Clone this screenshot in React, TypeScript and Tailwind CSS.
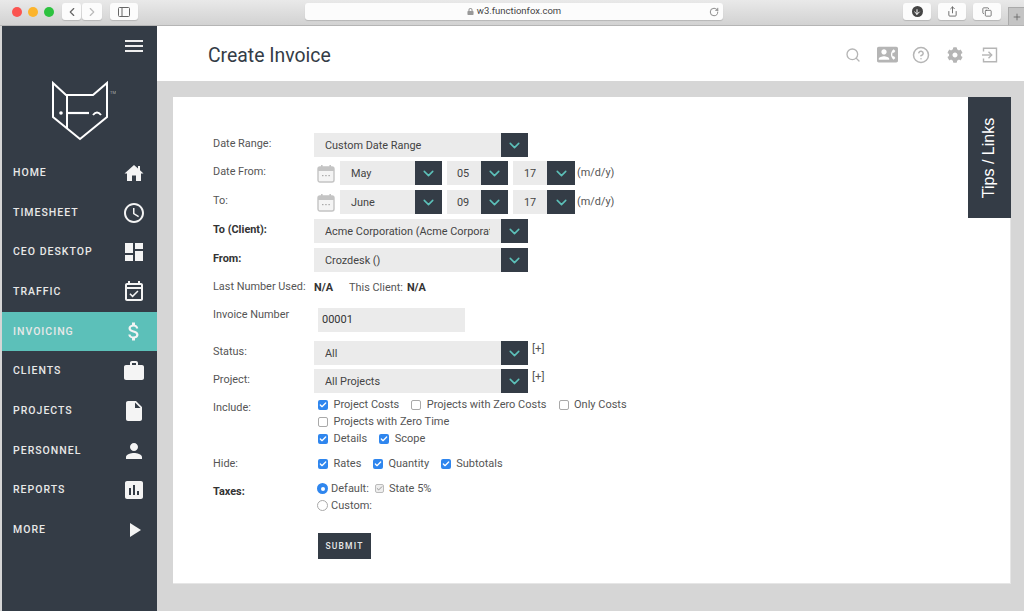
import { ChevronDown, ChevronLeft, ChevronRight, Check, RotateCw, Plus, ArrowDown, Share, Copy, Search, CircleHelp } from 'lucide-react'
import { FaCog, FaLock } from 'react-icons/fa'
import { MdAccessTime, MdDashboard, MdOutlineEventAvailable, MdAttachMoney, MdWork, MdInsertDriveFile, MdPerson, MdAssessment, MdPlayArrow, MdContactPhone } from 'react-icons/md'
import type { ReactNode } from 'react'

function HomeIcon() {
  return (
    <svg width="20" height="18" viewBox="0 0 20 18" fill="currentColor">
      <path d="M10 1 L0.5 9.5 H3 V17 H8 V11.5 H12 V17 H17 V9.5 H19.5 L16 6.3 V2 H14 V4.5 Z" />
    </svg>
  )
}

function ExitIcon() {
  return (
    <svg width="17" height="16" viewBox="0 0 17 16" fill="none" stroke="currentColor" strokeWidth="1.4">
      <path d="M2.5 4.5 V1.2 H15.5 V14.8 H2.5 V11.5" />
      <path d="M1 8 H10.5" />
      <path d="M7.5 4.8 L10.7 8 L7.5 11.2" />
    </svg>
  )
}

const NAV: { label: string; icon: ReactNode; active?: boolean }[] = [
  { label: 'HOME', icon: <HomeIcon /> },
  { label: 'TIMESHEET', icon: <MdAccessTime size={24} /> },
  { label: 'CEO DESKTOP', icon: <MdDashboard size={24} /> },
  { label: 'TRAFFIC', icon: <MdOutlineEventAvailable size={24} /> },
  { label: 'INVOICING', icon: <MdAttachMoney size={27} />, active: true },
  { label: 'CLIENTS', icon: <MdWork size={24} /> },
  { label: 'PROJECTS', icon: <MdInsertDriveFile size={24} /> },
  { label: 'PERSONNEL', icon: <MdPerson size={24} /> },
  { label: 'REPORTS', icon: <MdAssessment size={24} /> },
  { label: 'MORE', icon: <MdPlayArrow size={24} /> },
]

function Select({ value, width, arrow = 'w-[27px]', pad = 'ml-[11px]' }: { value: string; width: string; arrow?: string; pad?: string }) {
  return (
    <div className={`flex h-[24px] shrink-0 bg-[#ebebeb] ${width}`}>
      <div className={`mr-[11px] min-w-0 flex-1 overflow-hidden whitespace-nowrap pt-[0.5px] text-[10.9px] leading-[24px] text-[#444] ${pad}`}>{value}</div>
      <div className={`flex h-full shrink-0 items-center justify-center bg-[#343c46] text-[#5cc0b9] ${arrow}`}>
        <ChevronDown size={17} strokeWidth={2.2} />
      </div>
    </div>
  )
}

function Box({ label, checked = false }: { label: string; checked?: boolean }) {
  return (
    <span className="flex items-center gap-[5.5px]">
      {checked ? (
        <span className="flex h-[10px] w-[10px] items-center justify-center rounded-[2px] bg-[#2f86ee] text-white">
          <Check size={8} strokeWidth={4} />
        </span>
      ) : (
        <span className="h-[10px] w-[10px] rounded-[2px] border border-[#a9a9a9] bg-white" />
      )}
      <span>{label}</span>
    </span>
  )
}

function Row({ label, bold = false, h, children }: { label: string; bold?: boolean; h: string; children: ReactNode }) {
  return (
    <div className={`flex ${h}`}>
      <div className={`w-[101px] shrink-0 pt-[2px] text-[10.9px] leading-[17px] ${bold ? 'font-bold text-[#333]' : 'text-[#555]'}`}>{label}</div>
      <div className="min-w-0 flex-1">{children}</div>
    </div>
  )
}

function CalendarIcon() {
  return (
    <svg width="18" height="19" viewBox="0 0 18 19" className="ml-[3px] mr-[5px] shrink-0">
      <rect x="1" y="3" width="16" height="15" rx="2" fill="#f4f4f4" stroke="#c4c4c4" strokeWidth="1.4" />
      <rect x="1" y="3" width="16" height="4" fill="#c4c4c4" />
      <rect x="4" y="1" width="1.6" height="3" fill="#c4c4c4" />
      <rect x="12.4" y="1" width="1.6" height="3" fill="#c4c4c4" />
      <rect x="5" y="11" width="1.5" height="1.2" fill="#aaa" />
      <rect x="8.2" y="11" width="1.5" height="1.2" fill="#aaa" />
      <rect x="11.4" y="11" width="1.5" height="1.2" fill="#aaa" />
    </svg>
  )
}

function DateRow({ month, day, year }: { month: string; day: string; year: string }) {
  return (
    <div className="flex items-center">
      <CalendarIcon />
      <Select value={month} width="w-[102px]" />
      <div className="w-[5px]" />
      <Select value={day} width="w-[61px]" pad="ml-[10px]" />
      <div className="w-[5px]" />
      <Select value={year} width="w-[62px]" arrow="w-[28px]" />
      <span className="ml-[2px] text-[10.9px] text-[#555]">(m/d/y)</span>
    </div>
  )
}

function ChromeButton({ children, className = 'w-[28px]' }: { children: ReactNode; className?: string }) {
  return <div className={`flex h-[17px] items-center justify-center rounded-[3px] bg-[#fcfcfc] shadow-[0_1px_1px_rgba(0,0,0,0.15)] ${className}`}>{children}</div>
}

function Logo() {
  return (
    <svg width="66" height="62" viewBox="0 0 66 62" fill="none" stroke="#fff" strokeWidth="2">
      <path d="M3 3 L16 15 H43 L57 3 V37 L30 59 L3 37 Z" />
      <path d="M17 15 V49" />
      <path d="M17 33 H39" strokeWidth="2.2" />
      <circle cx="11" cy="33" r="1.8" fill="#fff" stroke="none" />
      <path d="M43 35 Q47 30 51 35" strokeWidth="2" />
      <text x="60" y="14" fontSize="4" fill="#aaa" stroke="none" fontFamily="Roboto, sans-serif">TM</text>
    </svg>
  )
}

export default function App() {
  return (
    <div className="flex h-[611px] w-[1024px] flex-col overflow-hidden bg-[#d6d6d6] font-['Roboto',sans-serif]">
      <div className="flex h-[26px] shrink-0 items-center border-b border-[#b5b5b5] bg-gradient-to-b from-[#e9e9e9] to-[#d2d2d2] pb-[2px]">
        <div className="ml-[12px] flex gap-[6px]">
          <span className="h-[10px] w-[10px] rounded-full bg-[#fb5450]" />
          <span className="h-[10px] w-[10px] rounded-full bg-[#fcb42c]" />
          <span className="h-[10px] w-[10px] rounded-full bg-[#2cc23f]" />
        </div>
        <div className="ml-[8px] flex gap-[1px]">
          <ChromeButton className="w-[19px]"><ChevronLeft size={14} className="text-[#666]" /></ChromeButton>
          <ChromeButton className="w-[20px]"><ChevronRight size={14} className="text-[#bbb]" /></ChromeButton>
        </div>
        <ChromeButton className="ml-[8px] w-[28px]">
          <svg width="12" height="10" viewBox="0 0 12 10" fill="none" stroke="#666" strokeWidth="1"><rect x="0.5" y="0.5" width="11" height="9" rx="1" /><path d="M4 0.5V9.5" /></svg>
        </ChromeButton>
        <div className="relative ml-[167px] flex h-[17px] w-[418px] items-center justify-center gap-[3px] rounded-[3px] bg-[#fcfcfc] text-[9.5px] text-[#444] shadow-[0_1px_1px_rgba(0,0,0,0.15)]">
          <FaLock size={7} className="text-[#999]" />
          <span>w3.functionfox.com</span>
          <RotateCw size={10} className="absolute right-[4px] text-[#777]" />
        </div>
        <div className="ml-[180px] flex gap-[7px]">
          <ChromeButton>
            <span className="flex h-[11px] w-[11px] items-center justify-center rounded-full bg-[#444] text-white"><ArrowDown size={8} strokeWidth={3} /></span>
          </ChromeButton>
          <ChromeButton><Share size={11} className="text-[#666]" /></ChromeButton>
          <ChromeButton><Copy size={10} className="text-[#666]" /></ChromeButton>
        </div>
        <div className="mb-[-2px] ml-auto flex h-[18px] w-[16px] items-center justify-center self-end border-l border-t border-[#aaa] bg-[#c4c4c4]">
          <Plus size={10} className="text-[#666]" />
        </div>
      </div>

      <div className="flex min-h-0 flex-1 pl-[2px]">
        <aside className="flex w-[155px] shrink-0 flex-col bg-[#343c46]">
          <div className="flex justify-end pr-[14px] pt-[14px]">
            <div className="flex w-[18px] flex-col gap-[3px]">
              <span className="h-[2px] bg-[#eee]" />
              <span className="h-[2px] bg-[#eee]" />
              <span className="h-[2px] bg-[#eee]" />
            </div>
          </div>
          <div className="flex pl-[48px] pt-[28px]">
            <Logo />
          </div>
          <nav className="mt-[11px] flex flex-col">
            {NAV.map((item) => (
              <div
                key={item.label}
                className={`flex h-[39.7px] items-center justify-between pl-[11px] ${item.active ? 'bg-[#5cc0b9]' : ''}`}
              >
                <span className="text-[10.5px] font-medium tracking-[1px] text-[#e8e8e8]">{item.label}</span>
                <span className="mr-[11px] flex w-[24px] justify-center text-[#f4f4f4]">{item.icon}</span>
              </div>
            ))}
          </nav>
        </aside>

        <div className="flex min-w-0 flex-1 flex-col">
          <header className="flex h-[55px] shrink-0 items-center justify-between bg-white pl-[51px] pr-[18px] pt-[2px]">
            <h1 className="pt-[2px] text-[19.4px] font-normal text-[#343c46]">Create Invoice</h1>
            <div className="flex items-center text-[#b5b5b5]">
              <span className="flex w-[34px] justify-center pr-[1px]"><Search size={16} /></span>
              <span className="flex w-[34px] justify-center"><MdContactPhone size={21} /></span>
              <span className="flex w-[34px] justify-center"><CircleHelp size={18} /></span>
              <span className="flex w-[34px] justify-center"><FaCog size={16} /></span>
              <span className="flex w-[34px] justify-center"><ExitIcon /></span>
            </div>
          </header>

          <div className="min-h-0 flex-1 pl-[16px] pt-[16px]">
            <div className="relative h-[487px] w-[838px] border-b border-r border-[#e6e6e6] bg-white pl-[40px] pt-[36px]">
              <div className="absolute right-[-1px] top-0 flex h-[121px] w-[43px] items-center justify-center bg-[#343c46]">
                <span className="-rotate-90 whitespace-nowrap font-['Liberation_Sans',sans-serif] text-[16px] text-white">Tips / Links</span>
              </div>

              <Row label="Date Range:" h="h-[28px]"><Select value="Custom Date Range" width="w-[214px]" /></Row>
              <Row label="Date From:" h="h-[29px]"><DateRow month="May" day="05" year="17" /></Row>
              <Row label="To:" h="h-[29px]"><DateRow month="June" day="09" year="17" /></Row>
              <Row label="To (Client):" bold h="h-[29px]"><Select value="Acme Corporation (Acme Corporation)" width="w-[214px]" /></Row>
              <Row label="From:" bold h="h-[28px]"><Select value="Crozdesk ()" width="w-[214px]" /></Row>
              <Row label="Last Number Used:" h="h-[28px]">
                <div className="flex pt-[2px] text-[10.9px] leading-[19px] text-[#555]">
                  <span className="font-bold text-[#333]">N/A</span>
                  <span className="ml-[16px]">This Client:</span>
                  <span className="ml-[4px] font-bold text-[#333]">N/A</span>
                </div>
              </Row>
              <Row label="Invoice Number" h="h-[37px]">
                <div className="ml-[4px] mt-[4px] h-[24px] w-[147px] bg-[#ebebeb] pl-[4px] text-[11px] leading-[24px] text-[#333]">00001</div>
              </Row>
              <Row label="Status:" h="h-[28px]">
                <div className="flex">
                  <Select value="All" width="w-[214px]" />
                  <span className="ml-[4px] text-[11.5px] leading-[14px] text-[#555]">[+]</span>
                </div>
              </Row>
              <Row label="Project:" h="h-[28px]">
                <div className="flex">
                  <Select value="All Projects" width="w-[214px]" />
                  <span className="ml-[4px] text-[11.5px] leading-[14px] text-[#555]">[+]</span>
                </div>
              </Row>
              <Row label="Include:" h="h-[56px]">
                <div className="ml-[4px] flex flex-col gap-[2px] text-[11px] leading-[15px] text-[#555]">
                  <div className="flex gap-[12px]">
                    <Box label="Project Costs" checked />
                    <Box label="Projects with Zero Costs" />
                    <Box label="Only Costs" />
                  </div>
                  <Box label="Projects with Zero Time" />
                  <div className="flex gap-[12px]">
                    <Box label="Details" checked />
                    <Box label="Scope" checked />
                  </div>
                </div>
              </Row>
              <Row label="Hide:" h="h-[28px]">
                <div className="ml-[4px] mt-[3px] flex gap-[11.5px] text-[11px] leading-[15px] text-[#555]">
                  <Box label="Rates" checked />
                  <Box label="Quantity" checked />
                  <Box label="Subtotals" checked />
                </div>
              </Row>
              <Row label="Taxes:" bold h="h-[52px]">
                <div className="ml-[3px] flex flex-col gap-[2px] text-[11px] leading-[15px] text-[#555]">
                  <div className="flex items-center">
                    <span className="mr-[3px] flex h-[11px] w-[11px] items-center justify-center rounded-full bg-[#2f86ee]"><span className="h-[4px] w-[4px] rounded-full bg-white" /></span>
                    <span>Default:</span>
                    <span className="ml-[6px] mr-[5px] flex h-[9px] w-[9px] items-center justify-center rounded-[2px] border border-[#bbb] bg-[#eee] text-[#888]"><Check size={7} strokeWidth={3} /></span>
                    <span>State 5%</span>
                  </div>
                  <div className="flex items-center">
                    <span className="mr-[3px] h-[11px] w-[11px] rounded-full border border-[#a9a9a9] bg-white" />
                    <span>Custom:</span>
                  </div>
                </div>
              </Row>
              <div className="pl-[105px]">
                <div className="flex h-[26px] w-[53px] items-center justify-center bg-[#343c46] text-[8.5px] font-medium tracking-[1.2px] text-[#e8e8e8]">SUBMIT</div>
              </div>
            </div>
          </div>
        </div>
      </div>
    </div>
  )
}
